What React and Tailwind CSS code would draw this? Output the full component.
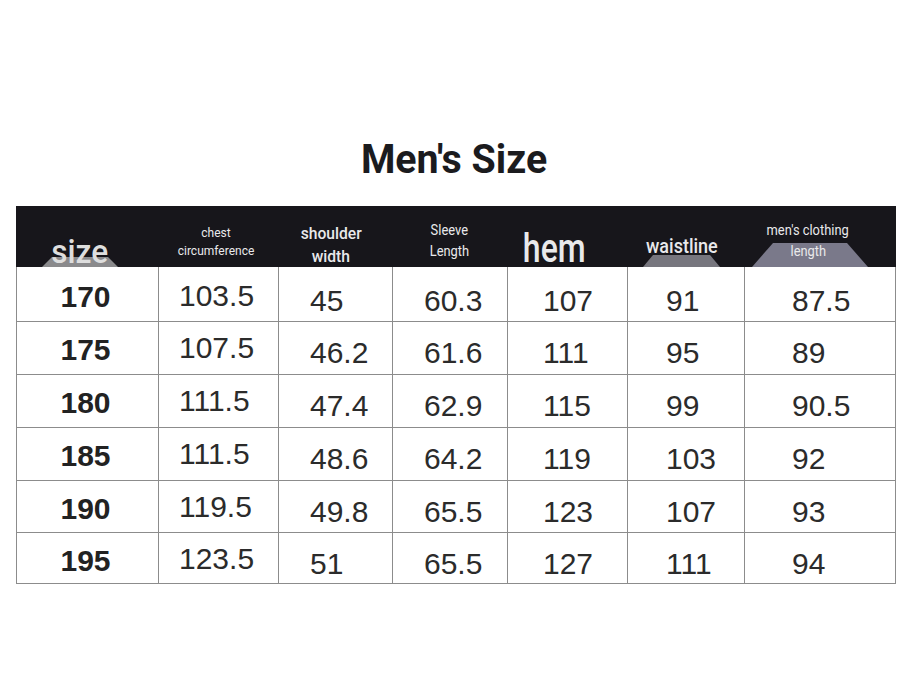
const cols = ["w-[142px]", "w-[120px]", "w-[114px]", "w-[115px]", "w-[120px]", "w-[117px]", "w-[152px]"];

const rows = [
  ["170", "103.5", "45", "60.3", "107", "91", "87.5"],
  ["175", "107.5", "46.2", "61.6", "111", "95", "89"],
  ["180", "111.5", "47.4", "62.9", "115", "99", "90.5"],
  ["185", "111.5", "48.6", "64.2", "119", "103", "92"],
  ["190", "119.5", "49.8", "65.5", "123", "107", "93"],
  ["195", "123.5", "51", "65.5", "127", "111", "94"],
];

const rowHeights = ["h-[55px]", "h-[53px]", "h-[53px]", "h-[53px]", "h-[52px]", "h-[51px]"];

// left padding of the number in each column (col 1 is centered)
const padX = ["", "pl-[20px]", "pl-[31px]", "pl-[31px]", "pl-[35px]", "pl-[38px]", "pl-[47px]"];

function Trapezoid({ className, w, h, inset, color }) {
  return (
    <svg className={className} width={w} height={h} viewBox={`0 0 ${w} ${h}`}>
      <polygon points={`0,${h} ${inset},0 ${w - inset},0 ${w},${h}`} fill={color} />
    </svg>
  );
}

function HeaderCell({ width, className = "", children, shape }) {
  return (
    <div className={`relative h-full ${width}`}>
      {shape}
      <div className={`relative flex flex-col items-center text-[#e9e9eb] ${className}`}>{children}</div>
    </div>
  );
}

export default function App() {
  return (
    <div className="w-[909px] h-[682px] bg-white overflow-hidden font-['Roboto',sans-serif]">
      <div className="pt-[139px] text-center">
        <h1 className="inline-block text-[41px] leading-none font-bold text-[#1b1b1e] scale-x-[0.96]">
          Men's Size
        </h1>
      </div>

      <div className="ml-[16px] mt-[26px] w-[880px]">
        {/* header */}
        <div className="flex h-[61px] bg-[#17161b]">
          <HeaderCell
            width="w-[142px]"
            className="pt-[28px] pr-[14px]"
            shape={<Trapezoid className="absolute bottom-0 left-[26px]" w={76} h={10} inset={10} color="#8a8a8c" />}
          >
            <span className="inline-block text-[34px] leading-none font-medium text-[#dedede] scale-x-[0.93]">size</span>
          </HeaderCell>
          <HeaderCell width="w-[120px]" className="pt-[18px] pr-[4px] text-[12px] leading-[18px]">
            <span>chest</span>
            <span>circumference</span>
          </HeaderCell>
          <HeaderCell width="w-[114px]" className="pt-[16px] pr-[8px] text-[17px] leading-[23px] font-medium">
            <span className="inline-block scale-x-[0.92]">shoulder</span>
            <span className="inline-block scale-x-[0.92]">width</span>
          </HeaderCell>
          <HeaderCell width="w-[115px]" className="pt-[14px] text-[14px] leading-[21px]">
            <span className="inline-block scale-x-[0.92]">Sleeve</span>
            <span className="inline-block scale-x-[0.92]">Length</span>
          </HeaderCell>
          <HeaderCell width="w-[120px]" className="pt-[23px] pr-[26px]">
            <span className="inline-block text-[40px] leading-none font-medium scale-x-[0.8]">hem</span>
          </HeaderCell>
          <HeaderCell
            width="w-[117px]"
            className="pt-[30px] pr-[7px]"
            shape={<Trapezoid className="absolute bottom-0 left-[16px]" w={77} h={12} inset={10} color="#77767e" />}
          >
            <span className="inline-block text-[20px] leading-none font-medium scale-x-[0.9]">waistline</span>
          </HeaderCell>
          <HeaderCell
            width="w-[152px]"
            className="pt-[14px] pr-[24px] text-[14px] leading-[21px]"
            shape={<Trapezoid className="absolute bottom-0 left-[8px]" w={116} h={24} inset={21} color="#7a798a" />}
          >
            <span className="inline-block scale-x-[0.92]">men's clothing</span>
            <span className="inline-block scale-x-[0.92]">length</span>
          </HeaderCell>
        </div>

        {/* body */}
        <div className="font-['Liberation_Sans',Arial,sans-serif] text-[30px] leading-none">
          {rows.map((r, ri) => (
            <div key={ri} className={`flex border-b border-[#8c8c8c] ${rowHeights[ri]}`}>
              {r.map((v, ci) => {
                const first = ri === 0;
                let pt;
                if (ci === 0) pt = first ? "pt-[15px]" : "pt-[13px]";
                else if (ci === 1) pt = first ? "pt-[14px]" : "pt-[11px]";
                else pt = first ? "pt-[19px]" : "pt-[16px]";
                return (
                  <div
                    key={ci}
                    className={`h-full border-l border-[#8c8c8c] ${cols[ci]} ${pt} ${padX[ci]} ${
                      ci === 6 ? "border-r" : ""
                    } ${ci === 0 ? "text-center pr-[4px] font-bold text-[#222]" : "text-[#2b2b2b]"}`}
                  >
                    {v}
                  </div>
                );
              })}
            </div>
          ))}
        </div>
      </div>
    </div>
  );
}
